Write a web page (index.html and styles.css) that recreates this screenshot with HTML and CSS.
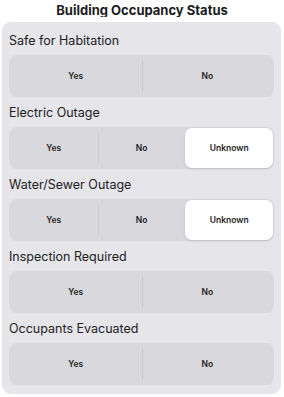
FILE: index.html
```html
<!DOCTYPE html>
<html>
<head>
    <meta charset="UTF-8">
    <title>Building Occupancy Status</title>
    <link rel="stylesheet" href="styles.css">
</head>
<body>
    <div class="title">Building Occupancy Status</div>
    <div class="card">
        <div class="section">
            <div class="label">Safe for Habitation</div>
            <div class="segmented two">
                <button class="seg">Yes</button>
                <button class="seg sep">No</button>
            </div>
        </div>
        <div class="section">
            <div class="label">Electric Outage</div>
            <div class="segmented three">
                <button class="seg">Yes</button>
                <button class="seg sep">No</button>
                <button class="seg selected">Unknown</button>
            </div>
        </div>
        <div class="section">
            <div class="label">Water/Sewer Outage</div>
            <div class="segmented three">
                <button class="seg">Yes</button>
                <button class="seg sep">No</button>
                <button class="seg selected">Unknown</button>
            </div>
        </div>
        <div class="section">
            <div class="label">Inspection Required</div>
            <div class="segmented two">
                <button class="seg">Yes</button>
                <button class="seg sep">No</button>
            </div>
        </div>
        <div class="section">
            <div class="label">Occupants Evacuated</div>
            <div class="segmented two">
                <button class="seg">Yes</button>
                <button class="seg sep">No</button>
            </div>
        </div>
    </div>
</body>
</html>
```

FILE: styles.css
```css
body {
    margin: 0;
    background-color: #ffffff;
    font-family: Inter, "Liberation Sans", Arial, sans-serif;
    color: #1c1c1e;
}

.title {
    height: 17px;
    padding-top: 2px;
    box-sizing: border-box;
    overflow: hidden;
    text-align: center;
    font-size: 13px;
    font-weight: 700;
    line-height: 17px;
}

.card {
    margin: 5px 3px 0 2px;
    padding: 9px 7px 9px 7px;
    background-color: #e5e5ea;
    border-radius: 9px;
    display: flex;
    flex-direction: column;
    gap: 6px;
}

.section {
    display: flex;
    flex-direction: column;
    gap: 4px;
}

.label {
    font-size: 12.5px;
    line-height: 20px;
    color: #222222;
}

.segmented {
    display: grid;
    height: 42px;
    padding: 1px;
    box-sizing: border-box;
    background-color: #d8d8dd;
    border-radius: 8px;
}

.segmented.two {
    grid-template-columns: 1fr 1fr;
}

.segmented.three {
    grid-template-columns: 1fr 1fr 1fr;
}

.seg {
    position: relative;
    border: none;
    background: none;
    padding: 0;
    font-family: inherit;
    font-size: 8.5px;
    font-weight: 600;
    color: #222222;
    border-radius: 7px;
}

.seg.sep::before {
    content: "";
    position: absolute;
    left: 0;
    top: 5px;
    bottom: 5px;
    width: 1px;
    background-color: #c7c7cc;
}

.seg.selected {
    background-color: #ffffff;
    box-shadow: 0 1px 3px rgba(0,0,0,0.12);
}
```
